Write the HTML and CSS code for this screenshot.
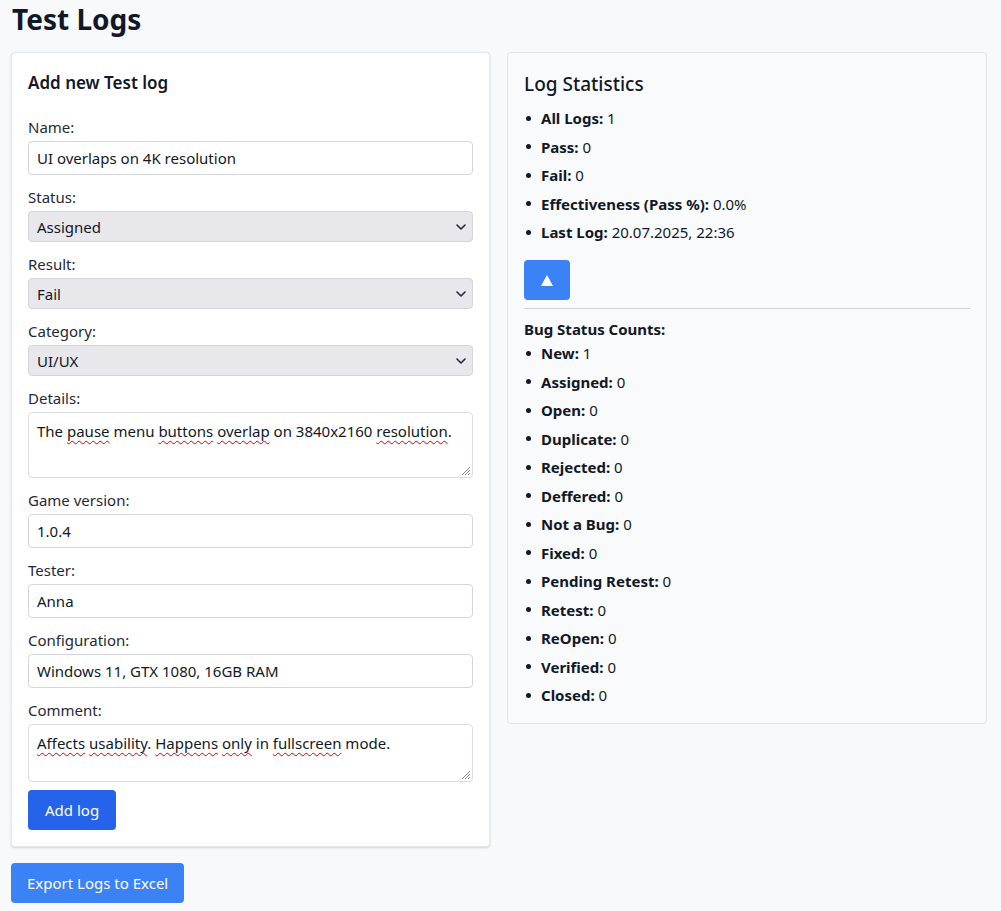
FILE: index.html
```html
<!DOCTYPE html>
<html lang="en">
<head>
<meta charset="utf-8">
<title>Test Logs</title>
<link rel="stylesheet" href="styles.css">
</head>
<body>
<div class="page">
  <h1 class="page-title">Test Logs</h1>
  <div class="columns">
    <form class="card form-card">
      <h3 class="card-title">Add new Test log</h3>
      <label class="field-label">Name:</label>
      <input class="field-input" type="text" value="UI overlaps on 4K resolution">
      <label class="field-label">Status:</label>
      <div class="select-wrap">
        <select class="field-select"><option>Assigned</option></select>
        <svg class="chevron" width="10" height="6" viewBox="0 0 10 6"><path d="M1 1l4 4 4-4" fill="none" stroke="#1f2937" stroke-width="1.6" stroke-linecap="round" stroke-linejoin="round"/></svg>
      </div>
      <label class="field-label">Result:</label>
      <div class="select-wrap">
        <select class="field-select"><option>Fail</option></select>
        <svg class="chevron" width="10" height="6" viewBox="0 0 10 6"><path d="M1 1l4 4 4-4" fill="none" stroke="#1f2937" stroke-width="1.6" stroke-linecap="round" stroke-linejoin="round"/></svg>
      </div>
      <label class="field-label">Category:</label>
      <div class="select-wrap">
        <select class="field-select"><option>UI/UX</option></select>
        <svg class="chevron" width="10" height="6" viewBox="0 0 10 6"><path d="M1 1l4 4 4-4" fill="none" stroke="#1f2937" stroke-width="1.6" stroke-linecap="round" stroke-linejoin="round"/></svg>
      </div>
      <label class="field-label">Details:</label>
      <div class="field-area area-details" role="textbox">The <span class="sp">pause</span> menu <span class="sp">buttons</span> <span class="sp">overlap</span> on 3840x2160 <span class="sp">resolution</span>.<svg class="grip" width="12" height="12" viewBox="0 0 12 12"><path d="M11 3L3 11M11 6L6 11M11 9L9 11" stroke="#8a8a8a" stroke-width="1"/></svg></div>
      <label class="field-label">Game version:</label>
      <input class="field-input" type="text" value="1.0.4">
      <label class="field-label">Tester:</label>
      <input class="field-input" type="text" value="Anna">
      <label class="field-label">Configuration:</label>
      <input class="field-input" type="text" value="Windows 11, GTX 1080, 16GB RAM">
      <label class="field-label">Comment:</label>
      <div class="field-area area-comment" role="textbox"><span class="sp">Affects</span> <span class="sp">usability</span>. <span class="sp">Happens</span> <span class="sp">only</span> in <span class="sp">fullscreen</span> mode.<svg class="grip" width="12" height="12" viewBox="0 0 12 12"><path d="M11 3L3 11M11 6L6 11M11 9L9 11" stroke="#8a8a8a" stroke-width="1"/></svg></div>
      <button class="btn btn-primary" type="button">Add log</button>
    </form>

    <section class="card stats-card">
      <h2 class="stats-title">Log Statistics</h2>
      <ul class="stat-list">
        <li><b>All Logs:</b>&nbsp;1</li>
        <li><b>Pass:</b>&nbsp;0</li>
        <li><b>Fail:</b>&nbsp;0</li>
        <li><b>Effectiveness (Pass %):</b>&nbsp;0.0%</li>
        <li><b>Last Log:</b>&nbsp;20.07.2025, 22:36</li>
      </ul>
      <button class="btn btn-toggle" type="button" aria-label="Collapse"><span class="tri"></span></button>
      <hr class="divider">
      <div class="sub-title">Bug Status Counts:</div>
      <ul class="stat-list">
        <li><b>New:</b>&nbsp;1</li>
        <li><b>Assigned:</b>&nbsp;0</li>
        <li><b>Open:</b>&nbsp;0</li>
        <li><b>Duplicate:</b>&nbsp;0</li>
        <li><b>Rejected:</b>&nbsp;0</li>
        <li><b>Deffered:</b>&nbsp;0</li>
        <li><b>Not a Bug:</b>&nbsp;0</li>
        <li><b>Fixed:</b>&nbsp;0</li>
        <li><b>Pending Retest:</b>&nbsp;0</li>
        <li><b>Retest:</b>&nbsp;0</li>
        <li><b>ReOpen:</b>&nbsp;0</li>
        <li><b>Verified:</b>&nbsp;0</li>
        <li><b>Closed:</b>&nbsp;0</li>
      </ul>
    </section>
  </div>
  <button class="btn btn-export" type="button">Export Logs to Excel</button>
</div>
</body>
</html>
```
FILE: styles.css
```css
* { box-sizing: border-box; }

html, body {
  margin: 0;
  padding: 0;
  background: #f8f9fb;
}

body {
  font-family: "Noto Sans", "Open Sans", sans-serif;
  font-size: 15px;
  line-height: 24px;
  color: #1f2937;
}

.page {
  padding: 0 14px 20px 11px;
}

.page-title {
  margin: 0 0 14px 0;
  padding-left: 1px;
  font-size: 28px;
  line-height: 38px;
  font-weight: 700;
  color: #111827;
}

.columns {
  display: grid;
  grid-template-columns: 479px 480px;
  column-gap: 17px;
  align-items: start;
}

.card {
  border-radius: 4px;
  padding: 16px;
}

.form-card {
  display: flex;
  flex-direction: column;
  background: #ffffff;
  border: 1px solid #e8e9ee;
  box-shadow: 0 1px 3px rgba(0, 0, 0, 0.10), 0 1px 2px rgba(0, 0, 0, 0.06);
}

.card-title {
  margin: 0 0 18px 0;
  font-size: 17px;
  line-height: 28px;
  font-weight: 600;
  color: #111827;
}

.field-label {
  display: block;
  margin-bottom: 2px;
  color: #1f2937;
}

.field-input {
  display: block;
  width: 100%;
  height: 34px;
  margin: 0 0 10px 0;
  padding: 0 8px;
  border: 1px solid #d4d5db;
  border-radius: 4px;
  background: #ffffff;
  font: inherit;
  color: #111827;
}

.select-wrap {
  position: relative;
  margin: 0 0 10px 0;
}

.field-select {
  display: block;
  width: 100%;
  height: 31px;
  margin: 0;
  padding: 0 8px;
  border: 1px solid #d4d5db;
  border-radius: 4px;
  background: #e8e7ec;
  font: inherit;
  color: #111827;
  appearance: none;
  -webkit-appearance: none;
}

.chevron {
  position: absolute;
  right: 7px;
  top: 13px;
}

.field-area {
  position: relative;
  width: 100%;
  margin: 0 0 10px 0;
  padding: 6px 8px;
  border: 1px solid #dcdde2;
  border-radius: 4px;
  background: #ffffff;
  color: #111827;
}

.area-details { height: 66px; }
.area-comment { height: 58px; margin-bottom: 8px; }

.sp {
  text-decoration: underline wavy #e00000;
  text-decoration-thickness: 1px;
  text-underline-offset: 3px;
  text-decoration-skip-ink: none;
}

.grip {
  position: absolute;
  right: 1px;
  bottom: 1px;
}

.btn {
  border: 0;
  border-radius: 4px;
  font: inherit;
  color: #ffffff;
  cursor: pointer;
}

.btn-primary {
  align-self: flex-start;
  height: 40px;
  padding: 0 17px;
  background: #2563eb;
}

.stats-card {
  background: #f9fafb;
  border: 1px solid #e3e4e8;
}

.stats-title {
  margin: 0 0 7px 0;
  font-size: 19px;
  line-height: 30px;
  font-weight: 500;
  color: #111827;
}

.stat-list {
  list-style: none;
  margin: 0;
  padding: 0;
  display: flex;
  flex-direction: column;
  gap: 4.5px;
}

.stat-list li {
  display: flex;
  align-items: center;
  color: #111827;
}

.stat-list li::before {
  content: "";
  width: 5px;
  height: 5px;
  border-radius: 50%;
  background: #111827;
  margin: 0 10px 0 2px;
  flex: none;
}

.stat-list b { font-weight: 700; }

.btn-toggle {
  display: flex;
  align-items: center;
  justify-content: center;
  width: 46px;
  height: 40px;
  margin-top: 16px;
  padding: 0;
  background: #3b82f6;
}

.tri {
  width: 0;
  height: 0;
  border-left: 6px solid transparent;
  border-right: 6px solid transparent;
  border-bottom: 11px solid #ffffff;
}

.divider {
  margin: 8px 0 0 0;
  border: 0;
  border-top: 1px solid #d1d5db;
  height: 0;
}

.sub-title {
  margin-top: 8px;
  font-weight: 700;
  color: #111827;
}

.btn-export {
  display: block;
  margin: 16px 0 0 0;
  height: 40px;
  padding: 0 16px;
  background: #3b82f6;
}
```
